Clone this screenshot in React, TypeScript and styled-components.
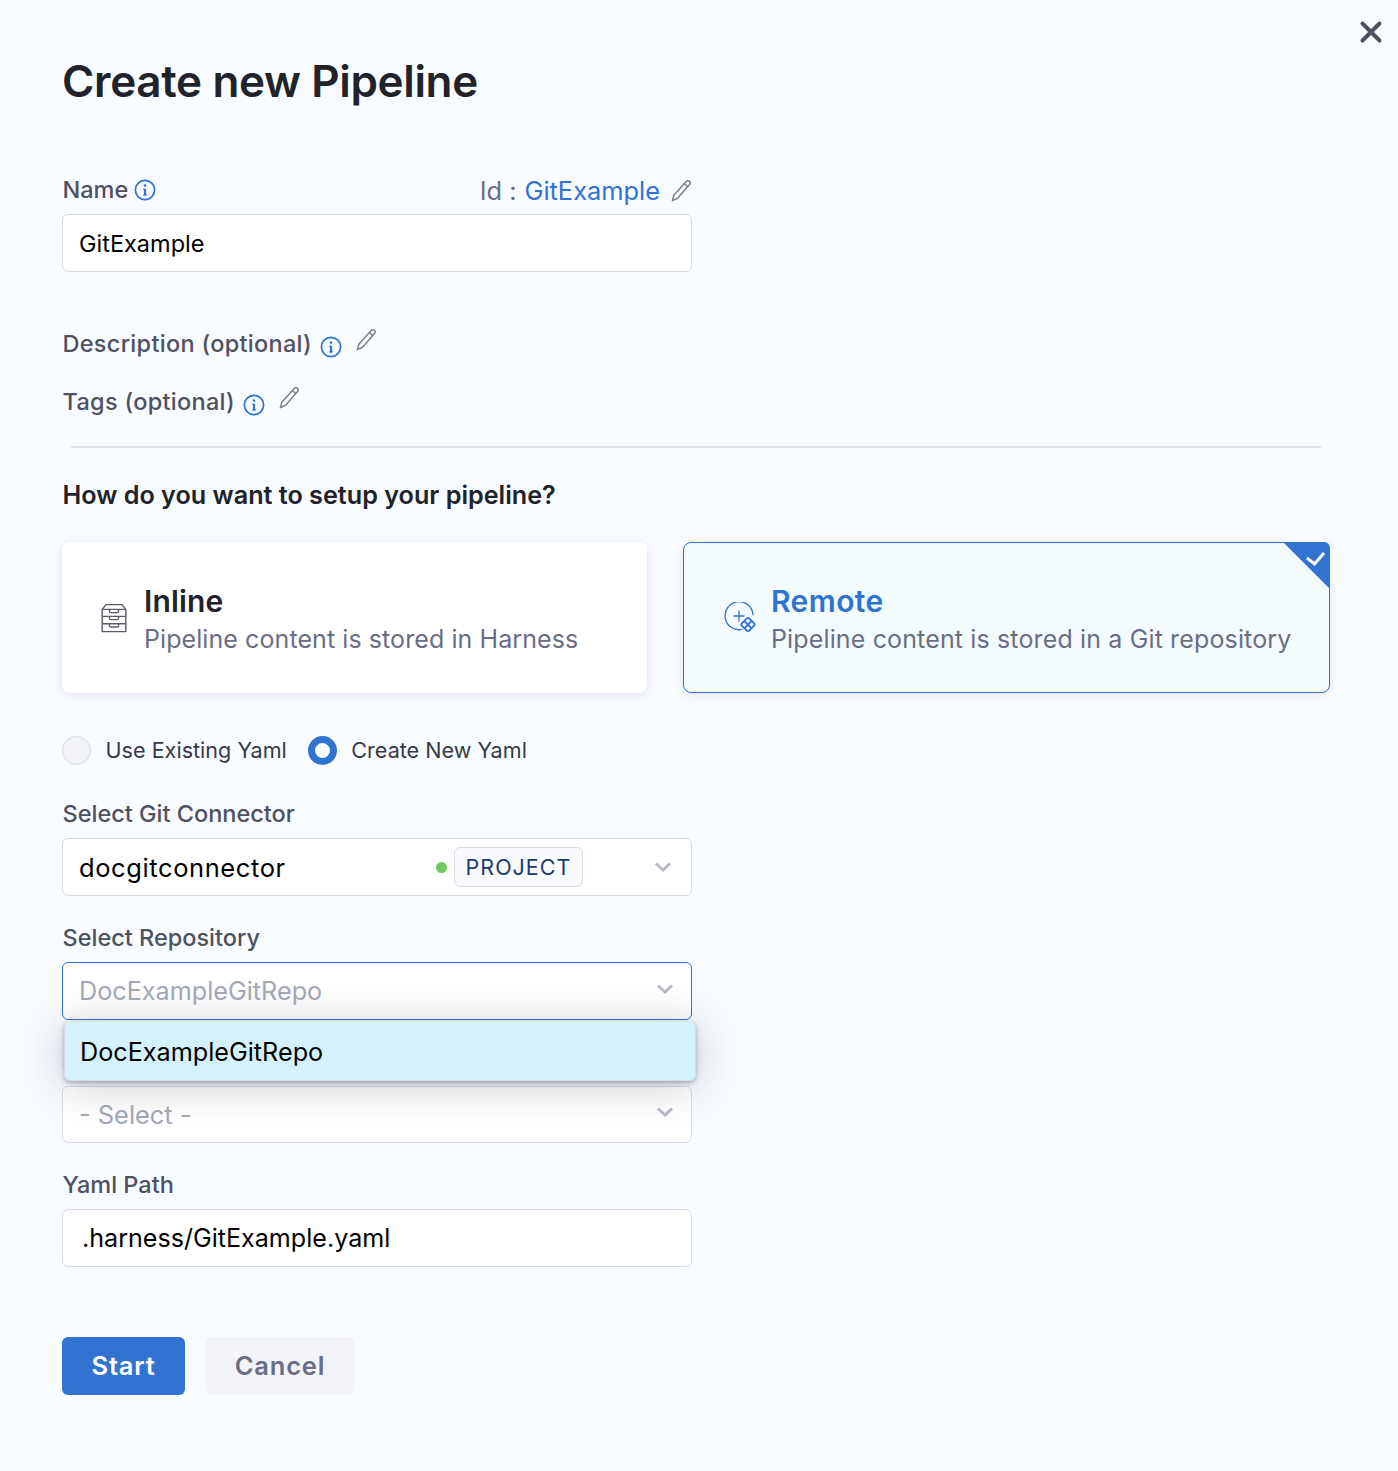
import React from "react";
import styled, { createGlobalStyle } from "styled-components";

const BLUE = "#3073d1";
const BORDER = "#d9dae5";
const SLATE = "#4f5162";
const GREY = "#6b6d85";

const GlobalStyle = createGlobalStyle`
  html, body {
    margin: 0;
    padding: 0;
    background: #f8fbff;
  }
  body {
    font-family: "Inter", "Liberation Sans", sans-serif;
  }
`;

const Page = styled.div`
  position: relative;
  box-sizing: border-box;
  width: 1398px;
  height: 1471px;
  padding: 55px 68px 0 62px;
  background: #f8fbff;
  overflow: hidden;
`;

const CloseButton = styled.button`
  position: absolute;
  top: 19px;
  right: 14px;
  width: 26px;
  height: 26px;
  padding: 0;
  border: none;
  background: none;
  color: ${SLATE};
  display: flex;
`;

const Title = styled.h1`
  margin: 0 0 67px 0;
  font-size: 44px;
  line-height: 53px;
  font-weight: 600;
  letter-spacing: -0.35px;
  color: #22222a;
`;

const Column = styled.div`
  width: 630px;
`;

const NameRow = styled.div`
  display: flex;
  justify-content: space-between;
  align-items: center;
  height: 30px;
  margin-bottom: 9px;
`;

const Label = styled.label<{ $spaced?: boolean }>`
  display: flex;
  align-items: center;
  gap: 6px;
  margin-left: 0.5px;
  font-size: 23.5px;
  line-height: 30px;
  font-weight: 500;
  letter-spacing: ${(p) => (p.$spaced ? "0.3px" : "0")};
  color: ${SLATE};
`;

const IdText = styled.div`
  display: flex;
  align-items: center;
  padding-top: 2px;
  font-size: 25.4px;
  line-height: 30px;
  color: ${GREY};
  span {
    color: ${BLUE};
    margin: 0 10px 0 8px;
  }
`;

const Field = styled.div<{ $focused?: boolean; $inset?: number; $height?: number }>`
  box-sizing: border-box;
  display: flex;
  align-items: center;
  height: ${(p) => p.$height ?? 58}px;
  padding: 0 ${(p) => p.$inset ?? 17}px 0 16px;
  border-radius: 6px;
  background: #fff;
  border: 1px solid ${(p) => (p.$focused ? BLUE : BORDER)};
  color: #000;
`;

const Value = styled.span<{ $size?: number; $track?: number; $placeholder?: boolean; $nudge?: boolean }>`
  flex: 1;
  font-size: ${(p) => p.$size ?? 23.5}px;
  letter-spacing: ${(p) => p.$track ?? 0}px;
  color: ${(p) => (p.$placeholder ? "#a3a9b6" : "#000")};
  padding-left: ${(p) => (p.$nudge ? "3px" : "0")};
`;

const OptionalRow = styled.div<{ $gap: number }>`
  display: flex;
  align-items: flex-start;
  gap: 8px;
  height: 30px;
  margin-top: ${(p) => p.$gap}px;
`;

const InfoOffset = styled.span`
  display: flex;
  margin-top: 7px;
`;

const PencilOffset = styled.span`
  display: flex;
  margin: -1px 0 0 5px;
`;

const Divider = styled.hr`
  margin: 29px 9px 0 9px;
  border: none;
  height: 2px;
  background: #dfe1e6;
`;

const Question = styled.h2`
  margin: 31px 0 31px 0.5px;
  font-size: 25.2px;
  line-height: 32px;
  font-weight: 600;
  color: #22222a;
`;

const CardRow = styled.div`
  display: flex;
  gap: 36px;
`;

const Card = styled.div<{ $selected?: boolean; $width: number }>`
  position: relative;
  box-sizing: border-box;
  display: flex;
  align-items: center;
  width: ${(p) => p.$width}px;
  height: 151px;
  padding: 0 0 0 ${(p) => (p.$selected ? "40px" : "38px")};
  gap: ${(p) => (p.$selected ? "15px" : "16px")};
  border-radius: 8px;
  background: ${(p) => (p.$selected ? "#f3fbfe" : "#fff")};
  border: ${(p) => (p.$selected ? `1px solid ${BLUE}` : "none")};
  box-shadow: 0 2px 8px rgba(96, 97, 112, 0.14);
`;

const Corner = styled.svg`
  position: absolute;
  top: -1px;
  right: -1px;
`;

const CardBody = styled.div`
  margin-top: 4px;
`;

const CardTitle = styled.div<{ $selected?: boolean }>`
  font-size: 30px;
  line-height: 36px;
  font-weight: 600;
  letter-spacing: ${(p) => (p.$selected ? "0.4px" : "0.15px")};
  color: ${(p) => (p.$selected ? BLUE : "#22222a")};
`;

const CardText = styled.div<{ $selected?: boolean }>`
  margin-top: 3px;
  font-size: 25px;
  line-height: 34px;
  letter-spacing: ${(p) => (p.$selected ? "0.14px" : "0.08px")};
  color: ${GREY};
  white-space: nowrap;
`;

const RadioRow = styled.div`
  display: flex;
  align-items: center;
  height: 30px;
  margin-top: 42px;
`;

const Radio = styled.span<{ $on?: boolean }>`
  box-sizing: border-box;
  flex: none;
  width: 29px;
  height: 29px;
  border-radius: 50%;
  background: ${(p) => (p.$on ? "#fff" : "#f3f3fa")};
  border: ${(p) => (p.$on ? `7px solid ${BLUE}` : `1px solid ${BORDER}`)};
`;

const RadioLabel = styled.span`
  margin: 0 21px 0 14.5px;
  font-size: 21.6px;
  color: #383946;
`;

const FieldGroup = styled.div<{ $top: number }>`
  margin-top: ${(p) => p.$top}px;
`;

const FieldLabel = styled(Label)`
  margin-bottom: 9px;
  height: 30px;
`;

const Dot = styled.span`
  width: 11px;
  height: 11px;
  margin-right: 7px;
  border-radius: 50%;
  background: #6ec95f;
`;

const Scope = styled.span`
  box-sizing: border-box;
  display: flex;
  align-items: center;
  justify-content: center;
  width: 129px;
  height: 40px;
  margin-right: 71px;
  border: 1px solid ${BORDER};
  border-radius: 6px;
  background: #f8fafd;
  font-size: 21.5px;
  letter-spacing: 1px;
  color: #1b3a6d;
`;

const Popover = styled.div`
  position: absolute;
  z-index: 2;
  top: 1021px;
  left: 64px;
  box-sizing: border-box;
  width: 632px;
  height: 60px;
  display: flex;
  align-items: center;
  padding: 2px 0 0 15px;
  border-radius: 6px;
  background: #d4f2fe;
  border: 1px solid #d9dae5;
  border-top-color: #d9e6ef;
  font-size: 25.2px;
  color: #000;
  box-shadow: 0 2px 4px rgba(40, 41, 61, 0.3), 0 4px 40px rgba(40, 41, 61, 0.26);
`;

const ButtonRow = styled.div`
  display: flex;
  gap: 21px;
  margin-top: 70px;
`;

const Button = styled.button<{ $primary?: boolean }>`
  height: 58px;
  width: ${(p) => (p.$primary ? "123px" : "148px")};
  padding: 0 0 2px;
  border: none;
  border-radius: 6px;
  font-family: inherit;
  font-size: 25.5px;
  font-weight: 600;
  letter-spacing: 0.8px;
  background: ${(p) => (p.$primary ? BLUE : "#f3f3fa")};
  color: ${(p) => (p.$primary ? "#fff" : GREY)};
`;

const Info = () => (
  <svg width="22" height="22" viewBox="0 0 22 22" fill="none" stroke={BLUE} strokeWidth="1.7">
    <circle cx="11" cy="11" r="9.6" />
    <path d="M11 10v6" strokeWidth="2.2" />
    <path d="M9.3 10.2H11M9.3 16h3.4" strokeWidth="1.3" />
    <circle cx="11" cy="6.6" r="1.3" fill={BLUE} stroke="none" />
  </svg>
);

const Pencil = () => (
  <svg width="22" height="24" viewBox="0 0 22 24" fill="none" stroke="#7d7f90" strokeWidth="1.5" strokeLinejoin="round">
    <path d="M16.2 2.4c1-1 2.4-.9 3.3 0 .9.9.9 2.2 0 3.2L7.6 19.3 2.4 21.6l1.4-5.4L16.2 2.4Z" />
    <path d="M14.4 4.5l3.4 3.1" />
  </svg>
);

const ChevronIcon = styled.svg<{ $raised?: boolean }>`
  flex: none;
  margin-top: ${(p) => (p.$raised ? "-5px" : "0")};
`;

const Chevron = ({ raised }: { raised?: boolean }) => (
  <ChevronIcon $raised={raised} width="18" height="12" viewBox="0 0 18 12" fill="none" stroke="#b9bac8" strokeWidth="3">
    <path d="M2 2.5l7 6.5 7-6.5" />
  </ChevronIcon>
);

const Cabinet = () => (
  <svg width="28" height="30" viewBox="0 0 28 30" fill="none" stroke="#5a5c6e" strokeWidth="1.4" strokeLinejoin="round">
    <path d="M2.2 28.6V6.4L6 1.6h16l3.8 4.8v22.2H2.2Z" />
    <path d="M2.2 6.4h23.6M2.2 13.4h23.6M2.2 20.8h23.6" />
    <path d="M9.4 6.6v1.6c0 .9.5 1.4 1.4 1.4h6.4c.9 0 1.4-.5 1.4-1.4V6.6" />
    <path d="M9.4 13.6v1.6c0 .9.5 1.4 1.4 1.4h6.4c.9 0 1.4-.5 1.4-1.4v-1.6" />
    <path d="M9.4 21v1.6c0 .9.5 1.4 1.4 1.4h6.4c.9 0 1.4-.5 1.4-1.4V21" />
  </svg>
);

const RemoteIcon = () => (
  <svg width="32" height="32" viewBox="0 0 32 32" fill="none" stroke={BLUE} strokeWidth="1.3">
    <path d="M18 27.4A14 14 0 1 1 29 12.6" strokeLinecap="round" />
    <path d="M15 8.5v11M9.5 14h11" />
    <g strokeWidth="1.9">
      <path d="M22.8 16.4a1.6 1.6 0 0 1 2.3 0l5 5a1.6 1.6 0 0 1 0 2.2l-5 5a1.6 1.6 0 0 1-2.3 0l-5-5a1.6 1.6 0 0 1 0-2.2l5-5Z" />
      <path d="M20.6 19.4l6.8 6.8M27.4 19.4l-6.8 6.8" />
    </g>
  </svg>
);

export default function App() {
  return (
    <Page>
      <GlobalStyle />
      <CloseButton aria-label="Close">
        <svg width="26" height="26" viewBox="0 0 26 26" fill="none" stroke="currentColor" strokeWidth="4" strokeLinecap="round">
          <path d="M4.5 4.5l17 17M21.5 4.5l-17 17" />
        </svg>
      </CloseButton>

      <Title>Create new Pipeline</Title>

      <Column>
        <NameRow>
          <Label>
            Name <Info />
          </Label>
          <IdText>
            Id : <span>GitExample</span>
            <Pencil />
          </IdText>
        </NameRow>
        <Field>
          <Value>GitExample</Value>
        </Field>

        <OptionalRow $gap={57}>
          <Label $spaced>Description (optional)</Label>
          <InfoOffset>
            <Info />
          </InfoOffset>
          <PencilOffset>
            <Pencil />
          </PencilOffset>
        </OptionalRow>
        <OptionalRow $gap={28}>
          <Label $spaced>Tags (optional)</Label>
          <InfoOffset>
            <Info />
          </InfoOffset>
          <PencilOffset>
            <Pencil />
          </PencilOffset>
        </OptionalRow>
      </Column>

      <Divider />
      <Question>How do you want to setup your pipeline?</Question>

      <CardRow>
        <Card $width={585}>
          <Cabinet />
          <CardBody>
            <CardTitle>Inline</CardTitle>
            <CardText>Pipeline content is stored in Harness</CardText>
          </CardBody>
        </Card>
        <Card $width={647} $selected>
          <RemoteIcon />
          <CardBody>
            <CardTitle $selected>Remote</CardTitle>
            <CardText $selected>Pipeline content is stored in a Git repository</CardText>
          </CardBody>
          <Corner width="47" height="47" viewBox="0 0 47 47">
            <path d="M0 0h41a6 6 0 0 1 6 6v41L0 0Z" fill={BLUE} />
            <path d="M24 16l7.5 6L41 11" fill="none" stroke="#fff" strokeWidth="3" />
          </Corner>
        </Card>
      </CardRow>

      <RadioRow>
        <Radio />
        <RadioLabel>Use Existing Yaml</RadioLabel>
        <Radio $on />
        <RadioLabel>Create New Yaml</RadioLabel>
      </RadioRow>

      <Column>
        <FieldGroup $top={34}>
          <FieldLabel>Select Git Connector</FieldLabel>
          <Field $inset={19}>
            <Value $size={25.5} $track={0.6}>docgitconnector</Value>
            <Dot />
            <Scope>PROJECT</Scope>
            <Chevron />
          </Field>
        </FieldGroup>

        <FieldGroup $top={27}>
          <FieldLabel>Select Repository</FieldLabel>
          <Field $focused>
            <Value $size={25.2} $placeholder>DocExampleGitRepo</Value>
            <Chevron raised />
          </Field>
        </FieldGroup>

        <FieldGroup $top={27}>
          <FieldLabel>Select Branch</FieldLabel>
          <Field $height={57}>
            <Value $size={25.4} $placeholder>- Select -</Value>
            <Chevron raised />
          </Field>
        </FieldGroup>

        <FieldGroup $top={27}>
          <FieldLabel>Yaml Path</FieldLabel>
          <Field>
            <Value $size={25.1} $nudge>.harness/GitExample.yaml</Value>
          </Field>
        </FieldGroup>
      </Column>

      <ButtonRow>
        <Button $primary>Start</Button>
        <Button>Cancel</Button>
      </ButtonRow>

      <Popover>DocExampleGitRepo</Popover>
    </Page>
  );
}
